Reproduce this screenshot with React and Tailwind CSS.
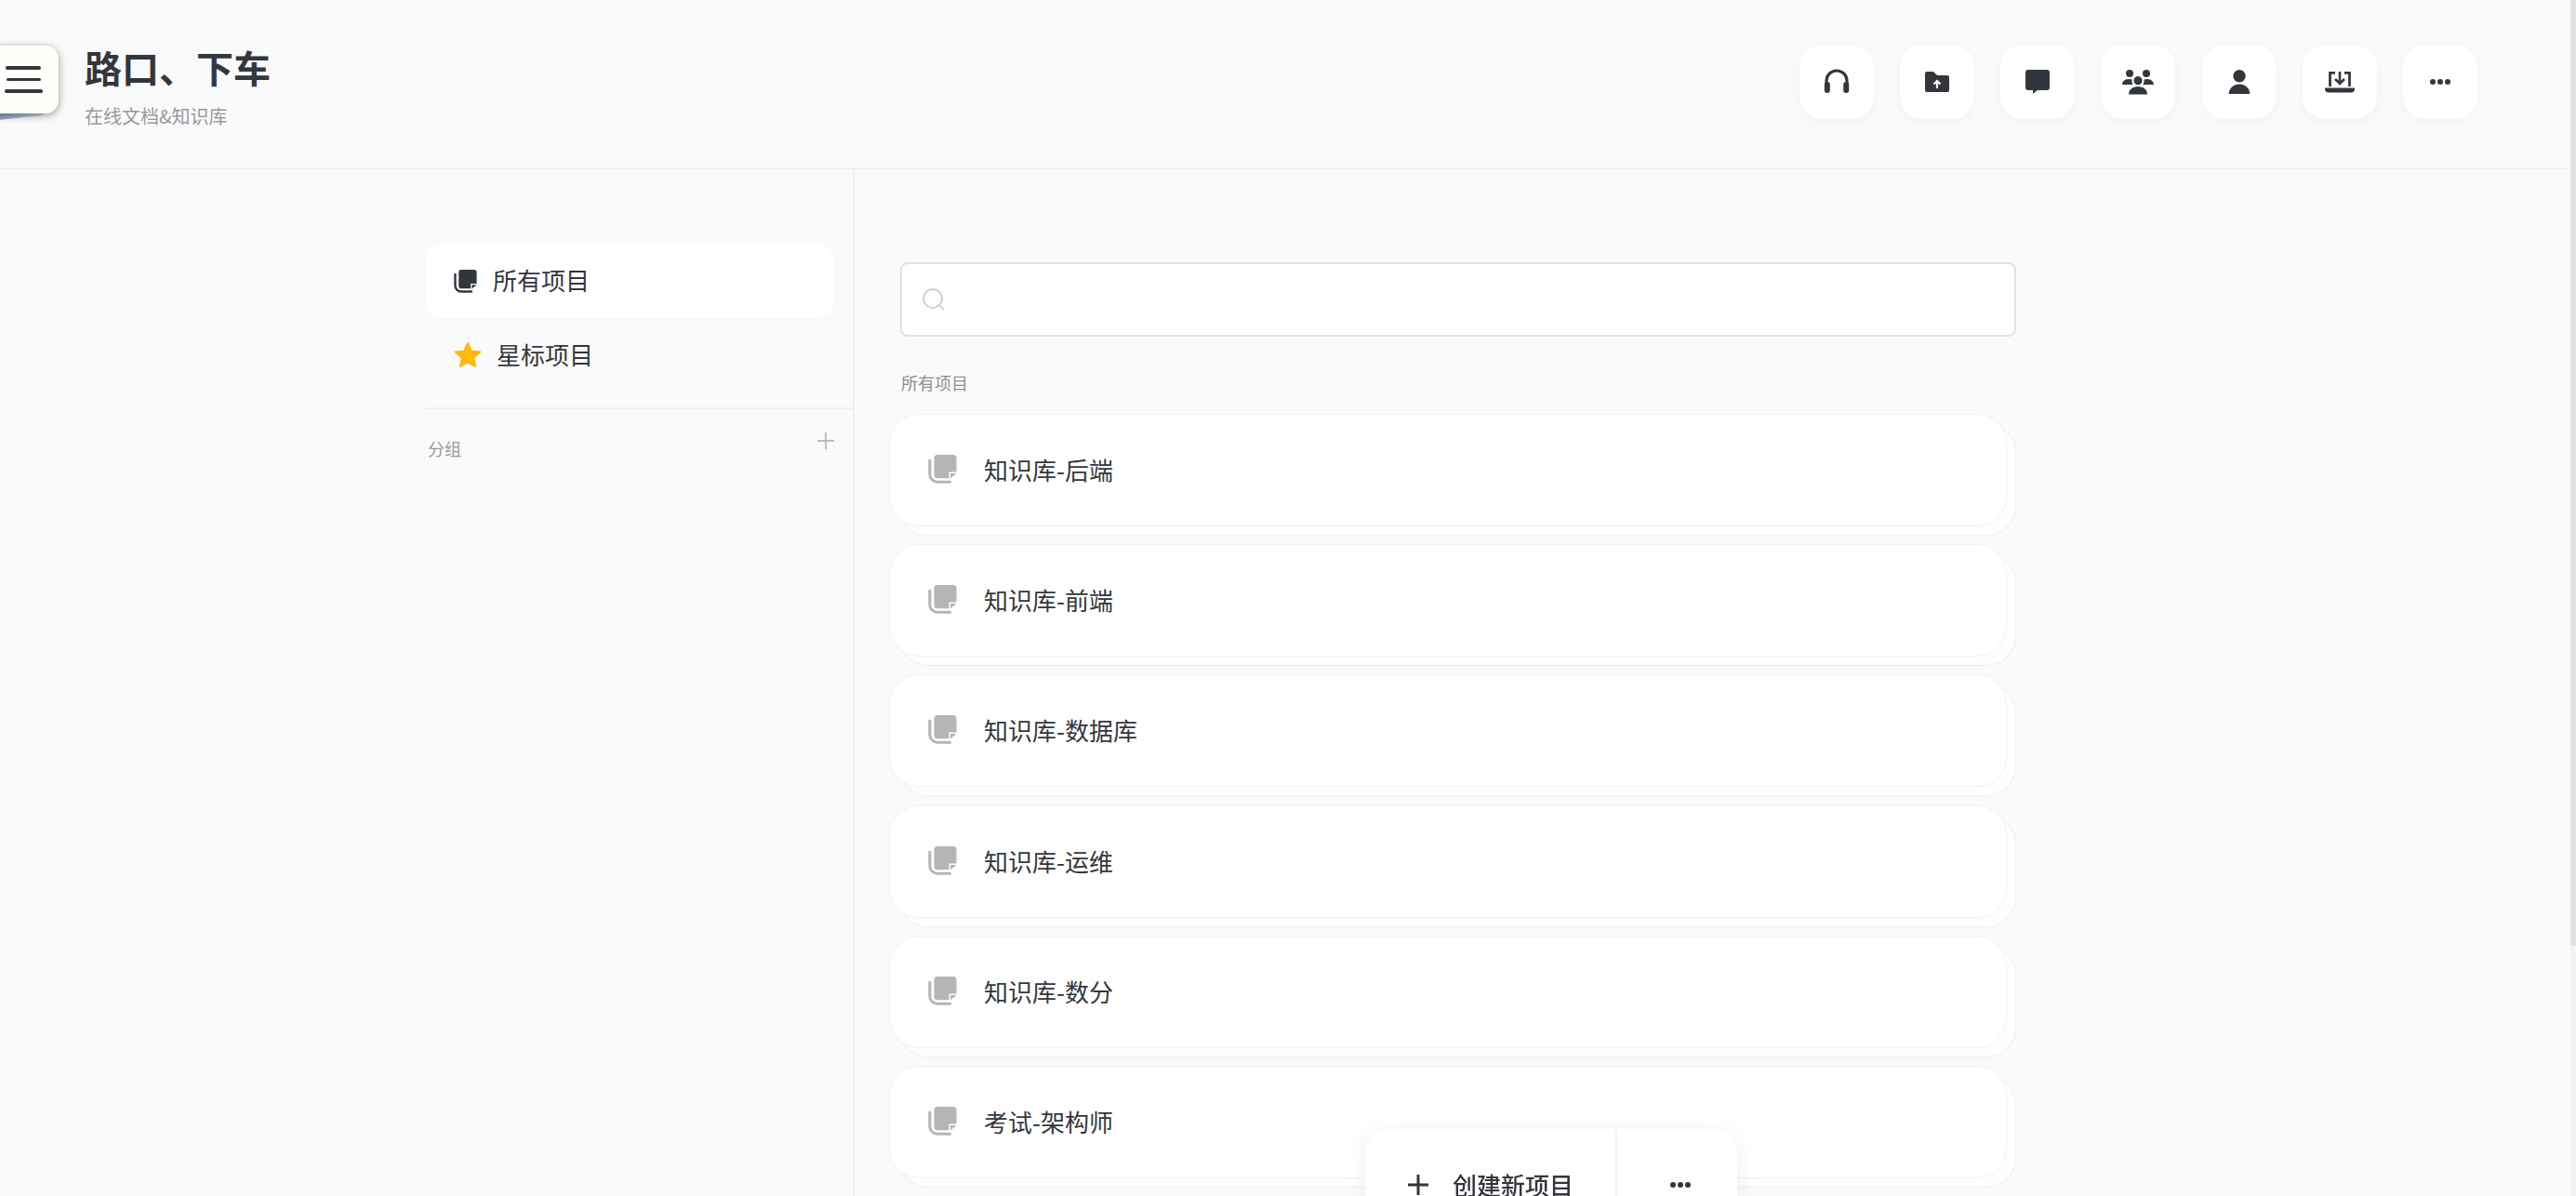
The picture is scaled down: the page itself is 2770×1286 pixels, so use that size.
import React from "react";

const Icon = ({ children }) => (
  <svg viewBox="-2 -2 36 36" width="36" height="36" fill="#33373d">{children}</svg>
);

const Headphones = () => (
  <Icon>
    <path d="M5 19V15a11 11 0 0 1 22 0v4" fill="none" stroke="#33373d" strokeWidth="3.200" />
    <rect x="2.800" y="16" width="6" height="12" rx="3" />
    <rect x="23.200" y="16" width="6" height="12" rx="3" />
  </Icon>
);
const FolderUp = () => (
  <Icon>
    <path d="M5 5h7l4 4h11a2 2 0 0 1 2 2v14a2 2 0 0 1-2 2H5a2 2 0 0 1-2-2V7a2 2 0 0 1 2-2z" />
    <path d="M16 23v-7M12.500 18.500 16 15l3.500 3.500" fill="none" stroke="#fff" strokeWidth="2.200" />
  </Icon>
);
const Chat = () => (
  <Icon>
    <rect x="3" y="3" width="26" height="22" rx="3" />
    <path d="M11 24.500h5.500L11 29z" />
  </Icon>
);
const Group = () => (
  <Icon>
    <circle cx="7" cy="7" r="4" />
    <circle cx="25" cy="7" r="4" />
    <circle cx="16" cy="14.700" r="4.600" />
    <path d="M-1 19c.3-4 3.500-6 7.500-6 1.300 0 2.300.2 3.200.6-.6 1.700-.2 3.700 1 5.400z" />
    <path d="M33 19c-.3-4-3.500-6-7.500-6-1.300 0-2.300.2-3.200.6.6 1.700.2 3.700-1 5.400z" />
    <path d="M6 29.500c0-5 4-8.500 10-8.500s10 3.500 10 8.500z" />
  </Icon>
);
const Person = () => (
  <Icon>
    <circle cx="16" cy="9.700" r="6.700" />
    <path d="M4.700 29c0-6 5-10.500 11.300-10.500S27.300 23 27.300 29z" />
  </Icon>
);
const Laptop = () => (
  <Icon>
    <path d="M11 6.300H5.500V21M21 6.300h5.500V21" fill="none" stroke="#33373d" strokeWidth="2.800" />
    <path d="M16 5v13M11 13l5 5 5-5" fill="none" stroke="#33373d" strokeWidth="2.600" />
    <path d="M0 22.500h32v1a4 4 0 0 1-4 4H4a4 4 0 0 1-4-4z" />
  </Icon>
);
const Dots = () => (
  <Icon>
    <circle cx="8" cy="16" r="3" />
    <circle cx="16" cy="16" r="3" />
    <circle cx="24" cy="16" r="3" />
  </Icon>
);

const Stack = ({ size, color }) => (
  <svg viewBox="0 0 31 31" width={size} height={size} fill={color} className="shrink-0">
    <path d="M10 0h17a3.500 3.500 0 0 1 3.500 3.500V18.500H22.500V25.200H10a3.500 3.500 0 0 1-3.500-3.500V3.500A3.500 3.500 0 0 1 10 0z" />
    <path d="M1.800 6v15a8.200 8.200 0 0 0 8.200 8.200h13.500" fill="none" stroke={color} strokeWidth="3" strokeLinecap="round" />
    <path d="M24 20h6.500L24 25.500z" />
  </svg>
);

const Star = () => (
  <svg viewBox="0 0 24 24" width="32" height="32" className="shrink-0">
    <path
      d="M12 2.200l2.900 6.400 7 .8-5.200 4.700 1.400 6.900L12 17.500l-6.100 3.500 1.400-6.900L2.100 9.400l7-.8z"
      fill="#ffb90f"
      stroke="#ffb90f"
      strokeWidth="1.500"
      strokeLinejoin="round"
    />
  </svg>
);

const headerIcons = [Headphones, FolderUp, Chat, Group, Person, Laptop, Dots];
const projects = ["知识库-后端", "知识库-前端", "知识库-数据库", "知识库-运维", "知识库-数分", "考试-架构师"];

export default function App() {
  return (
    <div className="flex h-screen w-full overflow-hidden bg-[#fafafa] font-['Noto_Sans_CJK_SC','Noto_Sans',sans-serif] text-[#33373d]">
      <div className="flex min-w-0 flex-1 flex-col">
        <header className="flex h-[182px] shrink-0 items-start border-b-2 border-[#f0f0f0]">
          <div className="relative -ml-[13px] mt-[49px] h-[73px] w-[76px] shrink-0">
            <div className="absolute left-0 top-[56px] h-[22px] w-[60px] -rotate-[6deg] rounded-[4px] bg-gradient-to-r from-[#7f97bb] to-[#c3cfdf]" />
            <div className="relative flex h-full w-full flex-col items-center justify-center gap-[9px] rounded-[14px] bg-[#fffef9] shadow-[0_2px_9px_rgba(0,0,0,0.4)]">
              <span className="h-[3.5px] w-[38px] rounded-full bg-[#33373d]" />
              <span className="h-[3.5px] w-[37px] rounded-full bg-[#33373d]" />
              <span className="h-[3.5px] w-[41px] rounded-full bg-[#33373d]" />
            </div>
          </div>
          <div className="ml-[28px] mt-[43px] flex flex-col">
            <div className="text-[40px] font-bold leading-[58px]">路口、下车</div>
            <div className="mt-[10px] text-[20px] leading-[28px] text-[#999999]">在线文档&amp;知识库</div>
          </div>
          <div className="ml-auto mr-[100px] mt-[48px] flex gap-[28.2px]">
            {headerIcons.map((I, i) => (
              <button
                key={i}
                className="flex h-[80px] w-[80px] items-center justify-center rounded-[24px] bg-white shadow-[0_2px_8px_rgba(0,0,0,0.04)]"
              >
                <I />
              </button>
            ))}
          </div>
        </header>

        <div className="flex min-h-0 flex-1">
          <aside className="ml-[458px] w-[461px] shrink-0 border-r-2 border-[#f0f0f0] pt-[80px]">
            <div className="mr-[20px] flex h-[80px] items-center gap-[17px] rounded-[20px] bg-white pl-[30px] text-[26px]">
              <Stack size={25} color="#33373d" />
              <span className="mb-[3px]">所有项目</span>
            </div>
            <div className="flex h-[80px] items-center gap-[15px] pl-[29px] text-[26px]">
              <Star />
              <span className="mb-[3px]">星标项目</span>
            </div>
            <div className="mt-[16px] border-t-2 border-[#f0f0f0]" />
            <div className="mr-[20px] flex items-start justify-between pl-[2px] pt-[26px]">
              <span className="mt-[2px] text-[18px] leading-[28px] text-[#999999]">分组</span>
              <svg viewBox="0 0 18 18" width="18" height="18" className="-mt-[1px]">
                <path d="M9 0v18M0 9h18" stroke="#aaaaaa" strokeWidth="1.500" />
              </svg>
            </div>
          </aside>

          <main className="min-w-0 flex-1 pl-[37px] pt-[100px]">
            <div className="ml-[12px] flex h-[80px] w-[1200px] items-center rounded-[8px] border-2 border-[#e1e1e5] bg-white pl-[22px]">
              <svg viewBox="0 0 24 24" width="24" height="24" fill="none" stroke="#c6c6ca" strokeWidth="1.500">
                <circle cx="11" cy="11" r="10" />
                <path d="M18.500 18.500l4.500 4.500" />
              </svg>
            </div>
            <div className="ml-[13px] mt-[36px] text-[18px] leading-[26px] text-[#8f8f8f]">所有项目</div>
            <div className="mt-[21px] flex flex-col gap-[19.2px]">
              {projects.map((p) => (
                <div
                  key={p}
                  className="flex h-[121px] w-[1202px] shrink-0 items-center gap-[29px] rounded-[32px] border border-[#f2f2f2] bg-white pb-[2px] pl-[41px] text-[26px] shadow-[10px_10px_0_-1px_#fefefe,10px_10px_0_0_#efefef]"
                >
                  <Stack size={31} color="#b5b5b5" />
                  <span>{p}</span>
                </div>
              ))}
            </div>
          </main>
        </div>
      </div>

      <div className="h-full w-[6px] shrink-0 bg-[#f2f2f2]">
        <div className="h-[1017px] w-full bg-[#e3e3e3]" />
      </div>

      <div className="fixed left-[1468px] top-[1214px] flex h-[72px] w-[400px] rounded-t-[26px] bg-white shadow-[0_4px_24px_rgba(0,0,0,0.07)]">
        <div className="flex h-full w-[271px] items-start border-r-2 border-[#f2f2f2] pl-[46px] pt-[48px] text-[26px] font-medium leading-[24px]">
          <svg viewBox="0 0 22 22" width="22" height="22" className="mt-[1px] shrink-0">
            <path d="M11 0v22M0 11h22" stroke="#33373d" strokeWidth="3" />
          </svg>
          <span className="ml-[26px]">创建新项目</span>
        </div>
        <div className="flex flex-1 justify-center pl-[6px] pt-[42px]">
          <Dots />
        </div>
      </div>
    </div>
  );
}
